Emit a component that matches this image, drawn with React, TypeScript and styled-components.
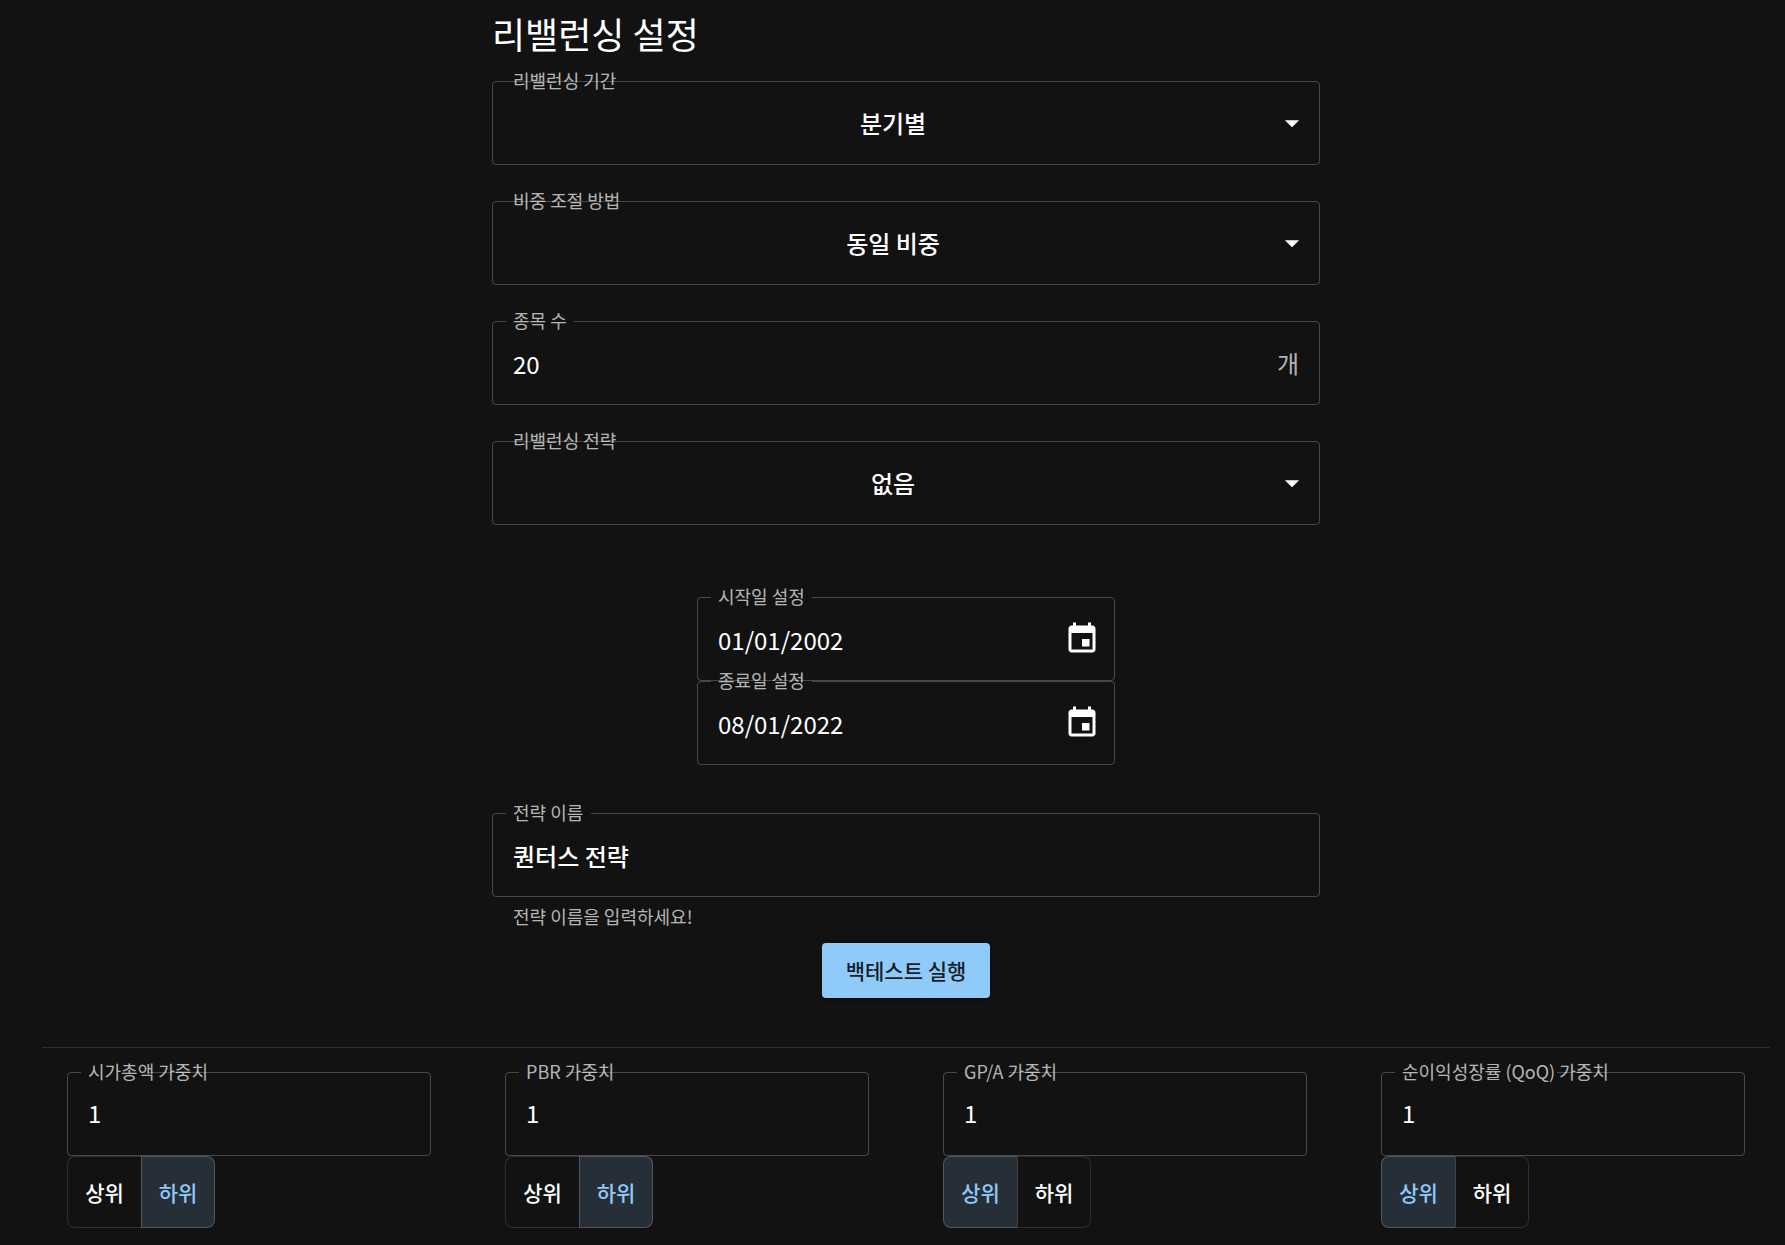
import React from "react";
import styled, { createGlobalStyle } from "styled-components";

const Global = createGlobalStyle`
  html, body { margin: 0; padding: 0; background: #121212; }
  body {
    color: #fff;
    font-family: "Noto Sans CJK KR", "Noto Sans", sans-serif;
    overflow: hidden;
    height: 1245px;
  }
`;

const Page = styled.div`
  width: 1785px;
  height: 1245px;
  overflow: hidden;
  background: #121212;
  display: flex;
  flex-direction: column;
`;

const Settings = styled.section`
  width: 828px;
  margin-left: 492px;
  display: flex;
  flex-direction: column;
`;

const Title = styled.h1`
  margin: 0;
  height: 81px;
  padding-top: 8px;
  box-sizing: border-box;
  font-size: 36px;
  line-height: 50px;
  font-weight: 400;
  color: #fff;
`;

const FieldBox = styled.div<{ $mb?: number }>`
  position: relative;
  height: 84px;
  margin-bottom: ${(p) => p.$mb ?? 0}px;
  display: flex;
  align-items: center;
  padding: 0 21px;
  box-sizing: border-box;
`;

const Outline = styled.fieldset`
  position: absolute;
  inset: 0;
  margin: 0;
  padding: 0 13px;
  border: 1px solid rgba(255, 255, 255, 0.23);
  border-radius: 4px;
  pointer-events: none;
  min-width: 0;
`;

const Notch = styled.legend<{ $w: number }>`
  padding: 0;
  height: 0;
  width: ${(p) => p.$w}px;
  float: none;
`;

const FloatLabel = styled.label`
  position: absolute;
  left: 21px;
  top: -13px;
  font-size: 18px;
  line-height: 24px;
  color: rgba(255, 255, 255, 0.7);
  white-space: nowrap;
`;

const Value = styled.div<{ $bold?: boolean }>`
  flex: 1;
  font-size: 24px;
  line-height: 32px;
  padding-top: 2px;
  font-weight: ${(p) => (p.$bold ? 500 : 400)};
  color: #fff;
  white-space: nowrap;
`;

const SelectValue = styled(Value)`
  text-align: center;
  padding-right: 26px;
  font-weight: 500;
  margin-bottom: 2px;
`;

const Caret = styled.svg`
  position: absolute;
  right: 11px;
  top: 25px;
  width: 34px;
  height: 34px;
  fill: #fff;
`;

const Unit = styled.span`
  font-size: 24px;
  line-height: 32px;
  color: rgba(255, 255, 255, 0.7);
`;

const CalendarIcon = styled.svg`
  width: 36px;
  height: 36px;
  fill: #fff;
  margin-right: -6px;
  margin-top: -1px;
`;

const Dates = styled.div`
  width: 418px;
  margin: 72px auto 48px;
  display: flex;
  flex-direction: column;
`;

const Helper = styled.p`
  margin: 7px 0 0 21px;
  height: 25px;
  font-size: 18px;
  line-height: 25px;
  color: rgba(255, 255, 255, 0.7);
`;

const RunButton = styled.button`
  align-self: center;
  width: 168px;
  height: 55px;
  margin-top: 14px;
  padding: 0 0 2px;
  border: 0;
  border-radius: 4px;
  background: #90caf9;
  color: rgba(0, 0, 0, 0.87);
  font: 500 21px/30px "Noto Sans CJK KR", sans-serif;
  box-shadow: 0 3px 1px -2px rgba(0,0,0,.2), 0 2px 2px 0 rgba(0,0,0,.14), 0 1px 5px 0 rgba(0,0,0,.12);
`;

const Divider = styled.hr`
  width: 1728px;
  margin: 49px 0 0 42px;
  border: 0;
  border-top: 1px solid rgba(255, 255, 255, 0.12);
`;

const Weights = styled.div`
  display: grid;
  grid-template-columns: repeat(4, 364px);
  column-gap: 74px;
  padding: 24px 0 0 67px;
`;

const WeightCol = styled.div`
  display: flex;
  flex-direction: column;
  align-items: flex-start;
`;

const WeightBox = styled(FieldBox)`
  width: 100%;
`;

const WeightValue = styled(Value)`
  margin-bottom: 4px;
`;

const Toggle = styled.div`
  display: inline-flex;
  height: 72px;
  border-radius: 8px;
`;

const ToggleBtn = styled.button<{ $on: boolean }>`
  width: 74px;
  height: 72px;
  box-sizing: border-box;
  border: 1px solid ${(p) => (p.$on ? "rgba(255,255,255,0.2)" : "rgba(255,255,255,0.12)")};
  background: ${(p) => (p.$on ? "rgba(144,202,249,0.16)" : "transparent")};
  color: ${(p) => (p.$on ? "#90caf9" : "#fff")};
  font: 500 21px/32px "Noto Sans CJK KR", sans-serif;
  padding: 0;
  &:first-child { border-radius: 8px 0 0 8px; border-right-width: 0; }
  &:last-child { border-radius: 0 8px 8px 0; border-left: 1px solid rgba(255,255,255,0.2); }
`;

function Field(props: { label: string; notch: number; mb?: number; children: React.ReactNode }) {
  return (
    <FieldBox $mb={props.mb}>
      <Outline><Notch $w={props.notch} /></Outline>
      <FloatLabel>{props.label}</FloatLabel>
      {props.children}
    </FieldBox>
  );
}

const caret = (
  <Caret viewBox="0 0 24 24"><path d="M7 10l5 5 5-5z" /></Caret>
);

const calendar = (
  <CalendarIcon viewBox="0 0 24 24">
    <path d="M17 12h-5v5h5v-5zM16 1v2H8V1H6v2H5c-1.11 0-1.99.9-1.99 2L3 19c0 1.1.89 2 2 2h14c1.1 0 2-.9 2-2V5c0-1.1-.9-2-2-2h-1V1h-2zm3 18H5V8h14v11z" />
  </CalendarIcon>
);

const weights = [
  { label: "시가총액 가중치", notch: 67, on: 1 },
  { label: "PBR 가중치", notch: 48, on: 1 },
  { label: "GP/A 가중치", notch: 52, on: 0 },
  { label: "순이익성장률 (QoQ) 가중치", notch: 162, on: 0 },
];

export default function App() {
  return (
    <Page>
      <Global />
      <Settings>
        <Title>리밸런싱 설정</Title>
        <Field label="리밸런싱 기간" notch={0} mb={36}>
          <SelectValue>분기별</SelectValue>{caret}
        </Field>
        <Field label="비중 조절 방법" notch={0} mb={36}>
          <SelectValue>동일 비중</SelectValue>{caret}
        </Field>
        <Field label="종목 수" notch={68} mb={36}>
          <Value>20</Value><Unit>개</Unit>
        </Field>
        <Field label="리밸런싱 전략" notch={0}>
          <SelectValue>없음</SelectValue>{caret}
        </Field>
        <Dates>
          <Field label="시작일 설정" notch={101}>
            <Value>01/01/2002</Value>{calendar}
          </Field>
          <Field label="종료일 설정" notch={101}>
            <Value>08/01/2022</Value>{calendar}
          </Field>
        </Dates>
        <Field label="전략 이름" notch={85}>
          <Value $bold>퀀터스 전략</Value>
        </Field>
        <Helper>전략 이름을 입력하세요!</Helper>
        <RunButton>백테스트 실행</RunButton>
      </Settings>
      <Divider />
      <Weights>
        {weights.map((w) => (
          <WeightCol key={w.label}>
            <WeightBox>
              <Outline><Notch $w={w.notch} /></Outline>
              <FloatLabel>{w.label}</FloatLabel>
              <WeightValue>1</WeightValue>
            </WeightBox>
            <Toggle>
              <ToggleBtn $on={w.on === 0}>상위</ToggleBtn>
              <ToggleBtn $on={w.on === 1}>하위</ToggleBtn>
            </Toggle>
          </WeightCol>
        ))}
      </Weights>
    </Page>
  );
}
